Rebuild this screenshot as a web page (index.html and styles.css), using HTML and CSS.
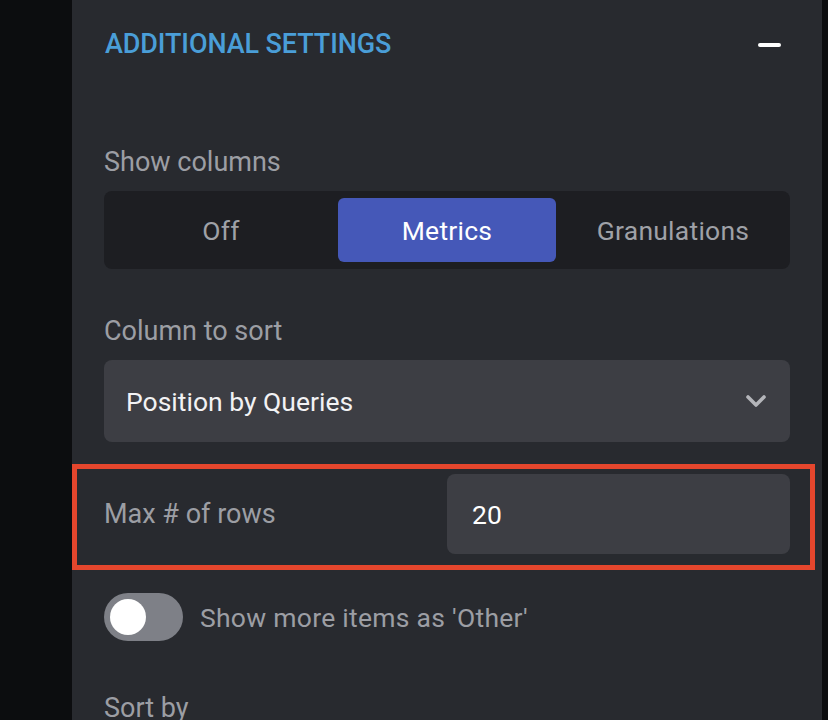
FILE: index.html
```html
<!DOCTYPE html>
<html lang="en">
<head>
    <meta charset="UTF-8">
    <meta name="viewport" content="width=device-width, initial-scale=1.0">
    <title>Additional Settings</title>
    <link rel="stylesheet" href="styles.css">
</head>
<body>

    <div class="layout">
        <div class="sidebar"></div>

        <div class="panel">
            <!-- Cabecera de la seccion -->
            <div class="section-header">
                <h2>ADDITIONAL SETTINGS</h2>
                <span class="collapse-icon"></span>
            </div>

            <!-- Mostrar columnas -->
            <div class="field-label">Show columns</div>
            <div class="segmented">
                <button class="segment">Off</button>
                <button class="segment active">Metrics</button>
                <button class="segment">Granulations</button>
            </div>

            <!-- Columna para ordenar -->
            <div class="field-label second">Column to sort</div>
            <div class="select">
                <span>Position by Queries</span>
                <svg class="chevron" width="22" height="14" viewBox="0 0 22 14">
                    <path d="M3 3 L11 11 L19 3" fill="none" stroke="#b4b5ba" stroke-width="3.6" stroke-linecap="round" stroke-linejoin="round"/>
                </svg>
            </div>

            <!-- Fila resaltada -->
            <div class="highlight">
                <div class="row">
                    <label class="row-label" for="maxRows">Max # of rows</label>
                    <input class="row-input" id="maxRows" type="text" value="20">
                </div>
            </div>

            <!-- Interruptor -->
            <div class="toggle-row">
                <span class="toggle"><span class="knob"></span></span>
                <span class="toggle-text">Show more items as 'Other'</span>
            </div>

            <div class="field-label last">Sort by</div>
        </div>

        <div class="edge"></div>
    </div>

</body>
</html>
```

FILE: styles.css
```css
body {
    margin: 0;
    font-family: Roboto, 'Liberation Sans', sans-serif;
    background-color: #0c0d0f;
    overflow: hidden;
}
.layout {
    display: flex;
    height: 720px;
}
.sidebar {
    width: 72px;
    background-color: #0c0d0f;
}
.edge {
    width: 6px;
    background-color: #0c0d0f;
}
.panel {
    flex: 1;
    background-color: #282a2f;
    padding: 0 32px;
}
.section-header {
    display: flex;
    align-items: center;
    justify-content: space-between;
    height: 88px;
}
.section-header h2 {
    margin: 0 0 0 1px;
    font-size: 27px;
    font-weight: 500;
    letter-spacing: -0.1px;
    color: #4a9ed8;
}
.collapse-icon {
    display: block;
    width: 23px;
    height: 4px;
    border-radius: 2px;
    background-color: #ffffff;
    margin-right: 9px;
    margin-top: 2px;
}
.field-label {
    margin-top: 58px;
    font-size: 27px;
    line-height: 32px;
    color: #9c9ea4;
}
.field-label.second {
    margin-top: 46px;
}
.field-label.last {
    margin-top: 51px;
}
/* Control segmentado */
.segmented {
    display: grid;
    grid-template-columns: 1fr 1fr 1fr;
    gap: 8px;
    margin-top: 13px;
    padding: 7px 8px;
    height: 64px;
    background-color: #1d1e22;
    border-radius: 8px;
}
.segment {
    border: none;
    background: transparent;
    font-family: inherit;
    font-size: 26.5px;
    letter-spacing: 0.25px;
    color: #9fa1a7;
    border-radius: 6px;
    padding: 0;
}
.segment.active {
    background-color: #4558b8;
    color: #ffffff;
}
/* Selector */
.select {
    display: flex;
    align-items: center;
    justify-content: space-between;
    margin-top: 13px;
    height: 82px;
    padding: 0 23px 0 22px;
    box-sizing: border-box;
    background-color: #3d3e44;
    border-radius: 8px;
    font-size: 26.5px;
    color: #f2f2f4;
}
.chevron {
    display: block;
}
/* Marco rojo */
.highlight {
    margin: 22px -25px 0 -32px;
    border: 5px solid #e5462d;
    padding: 5px 20px 11px 27px;
}
.row {
    display: grid;
    grid-template-columns: minmax(0, 1fr) minmax(0, 1fr);
    align-items: center;
}
.row-label {
    font-size: 27px;
    color: #9c9ea4;
}
.row-input {
    width: 100%;
    min-width: 0;
    height: 80px;
    box-sizing: border-box;
    border: none;
    border-radius: 8px;
    background-color: #3d3e44;
    padding: 0 25px;
    font-family: inherit;
    font-size: 26.5px;
    color: #ffffff;
    outline: none;
}
/* Interruptor */
.toggle-row {
    display: flex;
    align-items: center;
    gap: 17px;
    margin-top: 23px;
}
.toggle {
    display: flex;
    align-items: center;
    width: 79px;
    height: 48px;
    padding: 0 6px;
    box-sizing: border-box;
    border-radius: 24px;
    background-color: #7e8087;
}
.knob {
    width: 36px;
    height: 36px;
    border-radius: 50%;
    background-color: #ffffff;
}
.toggle-text {
    font-size: 26.5px;
    letter-spacing: 0.27px;
    color: #9c9ea4;
}
```
